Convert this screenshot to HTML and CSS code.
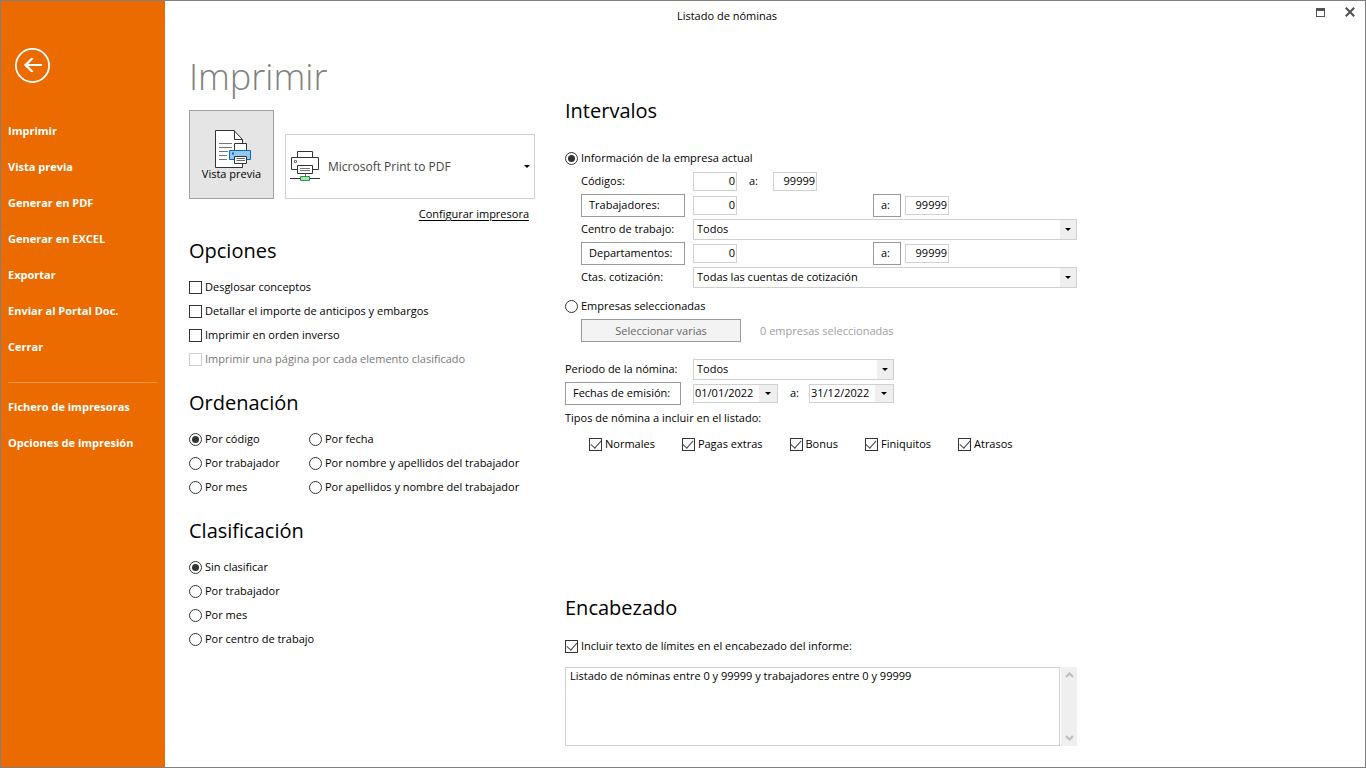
FILE: index.html
```
<!DOCTYPE html>
<html lang="es">
<head>
<meta charset="utf-8">
<meta name="viewport" content="width=device-width, initial-scale=1">
<title>Listado de nóminas</title>
<link rel="stylesheet" href="styles.css">
</head>
<body>
<div class="window">
  <nav class="sidebar" aria-label="Menú">
    <button class="back" type="button" aria-label="Volver">
      <svg width="36" height="36" viewBox="0 0 36 36" fill="none" stroke="#fff"><circle cx="17.500" cy="18.500" r="16.600" stroke-width="1.800"/><path d="M27 18H11" stroke-width="2"/><path d="M18 11.500h-2L9.500 18l6.500 6.500h2L11.800 18z" fill="#fff" stroke-width="1"/></svg>
    </button>
    <ul class="menu">
      <li><a href="#">Imprimir</a></li>
      <li><a href="#">Vista previa</a></li>
      <li><a href="#">Generar en PDF</a></li>
      <li><a href="#">Generar en EXCEL</a></li>
      <li><a href="#">Exportar</a></li>
      <li><a href="#">Enviar al Portal Doc.</a></li>
      <li><a href="#">Cerrar</a></li>
    </ul>
    <ul class="menu menu-extra">
      <li><a href="#">Fichero de impresoras</a></li>
      <li><a href="#">Opciones de impresión</a></li>
    </ul>
  </nav>

  <div class="page">
    <header class="titlebar">
      <span class="title">Listado de nóminas</span>
      <div class="window-buttons">
        <button type="button" aria-label="Maximizar"><svg width="9" height="9" viewBox="0 0 9 9" shape-rendering="crispEdges"><path d="M.5.5h8v8h-8z" fill="none" stroke="#555"/><path d="M0 0h9v3H0z" fill="#555"/></svg></button>
        <button type="button" aria-label="Cerrar ventana"><svg width="10" height="10" viewBox="0 0 10 10"><path d="M.8.8l8.400 8.400M9.200.8L.8 9.200" stroke="#555" stroke-width="2.200"/></svg></button>
      </div>
    </header>

    <main class="content">
      <div class="left">
        <h1>Imprimir</h1>
        <div class="printer-row">
          <button class="preview" type="button">
            <svg width="37" height="38" viewBox="0 0 37 38" fill="none"><path d="M.5.5H19l8.500 9V37.500H.5z" fill="#fff" stroke="#333"/><path d="M19.500.5v9h8" stroke="#333"/><path d="M4 13.500h13M4 17.500h13M4 21.500h9M4 25.500h8M4 29.500h8" stroke="#777"/><path d="M19.500 13.500h12v8h-12z" fill="#fff" stroke="#333"/><path d="M14.500 20.500h21v9h-21z" fill="#92c7f0" stroke="#1267b4"/><path d="M17 22.500h2v2h-2z" fill="#1267b4"/><path d="M19.500 26.500h12v7h-12z" fill="#fff" stroke="#333"/><path d="M21.500 28.500h8.500M21.500 30.500h8.500" stroke="#666"/></svg>
            <span>Vista previa</span>
          </button>
          <div class="combo printer">
            <svg class="printer-icon" width="30" height="31" viewBox="0 0 30 31" fill="none"><path d="M7.500 6.500v-6h15v6" fill="#fff" stroke="#333"/><path d="M7.500 18.500h-6v-12h27v12h-6" fill="#fff" stroke="#333"/><path d="M4.500 9.500h2v2h-2z" stroke="#777"/><path d="M7.500 14.500h15v8h-15z" fill="#fff" stroke="#333"/><path d="M10 17.500h10M10 19.500h10" stroke="#777"/><path d="M15.500 23v2" stroke="#777"/><path d="M0 27.500h30" stroke="#333"/><path d="M10.500 25.500h9v4h-9z" fill="#b5dfb8" stroke="#1a9a48"/></svg>
            <select aria-label="Impresora"><option>Microsoft Print to PDF</option></select>
            <span class="arrow"></span>
          </div>
        </div>
        <div class="config"><a href="#">Configurar impresora</a></div>

        <section class="group">
          <h2>Opciones</h2>
          <label class="choice"><input type="checkbox">Desglosar conceptos</label>
          <label class="choice"><input type="checkbox">Detallar el importe de anticipos y embargos</label>
          <label class="choice"><input type="checkbox">Imprimir en orden inverso</label>
          <label class="choice off"><input type="checkbox" disabled>Imprimir una página por cada elemento clasificado</label>
        </section>

        <section class="group">
          <h2>Ordenación</h2>
          <div class="order">
            <label class="choice"><input type="radio" name="orden" checked>Por código</label>
            <label class="choice"><input type="radio" name="orden">Por fecha</label>
            <label class="choice"><input type="radio" name="orden">Por trabajador</label>
            <label class="choice"><input type="radio" name="orden">Por nombre y apellidos del trabajador</label>
            <label class="choice"><input type="radio" name="orden">Por mes</label>
            <label class="choice"><input type="radio" name="orden">Por apellidos y nombre del trabajador</label>
          </div>
        </section>

        <section class="group">
          <h2>Clasificación</h2>
          <label class="choice"><input type="radio" name="clase" checked>Sin clasificar</label>
          <label class="choice"><input type="radio" name="clase">Por trabajador</label>
          <label class="choice"><input type="radio" name="clase">Por mes</label>
          <label class="choice"><input type="radio" name="clase">Por centro de trabajo</label>
        </section>
      </div>

      <div class="right">
        <section class="ranges">
          <h2>Intervalos</h2>
          <label class="choice"><input type="radio" name="ambito" checked>Información de la empresa actual</label>
          <div class="fields indent">
            <label for="cod1">Códigos:</label>
            <div class="pair"><input class="num" id="cod1" type="text" value="0"><label class="to" for="cod2">a:</label><input class="num" id="cod2" type="text" value="99999"></div>
            <button class="btn" type="button">Trabajadores:</button>
            <div class="pair wide"><input class="num" type="text" value="0" aria-label="Trabajadores desde"><span class="far"><button class="btn" type="button">a:</button><input class="num" type="text" value="99999" aria-label="Trabajadores hasta"></span></div>
            <label for="centro">Centro de trabajo:</label>
            <div class="combo"><select id="centro"><option>Todos</option></select><span class="arrow"></span></div>
            <button class="btn" type="button">Departamentos:</button>
            <div class="pair wide"><input class="num" type="text" value="0" aria-label="Departamentos desde"><span class="far"><button class="btn" type="button">a:</button><input class="num" type="text" value="99999" aria-label="Departamentos hasta"></span></div>
            <label for="ctas">Ctas. cotización:</label>
            <div class="combo"><select id="ctas"><option>Todas las cuentas de cotización</option></select><span class="arrow"></span></div>
          </div>
          <label class="choice companies"><input type="radio" name="ambito">Empresas seleccionadas</label>
          <div class="several indent">
            <button class="btn" type="button" disabled>Seleccionar varias</button>
            <span>0 empresas seleccionadas</span>
          </div>
          <div class="fields period">
            <label for="periodo">Periodo de la nómina:</label>
            <div class="combo short"><select id="periodo"><option>Todos</option></select><span class="arrow"></span></div>
            <button class="btn" type="button">Fechas de emisión:</button>
            <div class="pair">
              <span class="date"><input type="text" value="01/01/2022" aria-label="Fecha desde"><button type="button" aria-label="Abrir calendario desde"><span class="tri"></span></button></span>
              <span class="to">a:</span>
              <span class="date"><input type="text" value="31/12/2022" aria-label="Fecha hasta"><button type="button" aria-label="Abrir calendario hasta"><span class="tri"></span></button></span>
            </div>
          </div>
          <p class="types-title">Tipos de nómina a incluir en el listado:</p>
          <div class="types">
            <label class="choice"><input type="checkbox" checked>Normales</label>
            <label class="choice"><input type="checkbox" checked>Pagas extras</label>
            <label class="choice"><input type="checkbox" checked>Bonus</label>
            <label class="choice"><input type="checkbox" checked>Finiquitos</label>
            <label class="choice"><input type="checkbox" checked>Atrasos</label>
          </div>
        </section>

        <section class="heading-text">
          <h2>Encabezado</h2>
          <label class="choice"><input type="checkbox" checked>Incluir texto de límites en el encabezado del informe:</label>
          <div class="memo">
            <textarea aria-label="Texto del encabezado">Listado de nóminas entre 0 y 99999 y trabajadores entre 0 y 99999</textarea>
            <div class="scroll" aria-hidden="true">
              <svg width="9" height="6" viewBox="0 0 9 6"><path d="M1 5l3.500-3.500L8 5" fill="none" stroke="#bdbdbd" stroke-width="2"/></svg>
              <svg width="9" height="6" viewBox="0 0 9 6"><path d="M1 1l3.500 3.500L8 1" fill="none" stroke="#bdbdbd" stroke-width="2"/></svg>
            </div>
          </div>
        </section>
      </div>
    </main>
  </div>
</div>
</body>
</html>
```
FILE: styles.css
```
* { box-sizing: border-box; }

body {
  margin: 0;
  background: #fff;
  color: #000;
  font: 11px/16px "Open Sans", "Noto Sans", sans-serif;
}

button, input, select, textarea { font: inherit; color: inherit; margin: 0; }
button { cursor: pointer; }
h1, h2, p, ul { margin: 0; padding: 0; }
ul { list-style: none; }

.window {
  display: flex;
  min-height: 100vh;
  border: 1px solid #808080;
}

/* Sidebar */
.sidebar {
  flex: 0 0 164px;
  padding: 46px 8px 0 7px;
  background: #eb6b00;
  color: #fff;
  font-weight: 700;
}
.back {
  display: block;
  margin: 0 0 30px 7px;
  padding: 0;
  border: 0;
  background: none;
}
.back svg { display: block; }
.menu a {
  display: block;
  color: #fff;
  line-height: 36px;
  text-decoration: none;
}
.menu-extra {
  margin-top: 17px;
  padding-top: 6px;
  border-top: 1px solid #f09144;
}

/* Title bar */
.page { flex: 1; min-width: 0; }
.titlebar { display: flex; height: 30px; align-items: center; }
.title { flex: 1; text-align: center; }
.window-buttons {
  display: flex;
  flex: 0 0 76px;
  justify-content: flex-end;
  gap: 20px;
  padding: 0 10px 8px 0;
  align-items: center;
}
.window-buttons button { padding: 0; border: 0; background: none; }
.window-buttons svg { display: block; }

/* Columns */
.content {
  display: grid;
  grid-template-columns: minmax(0, 346fr) minmax(0, 512fr);
  gap: 30px;
  max-width: 936px;
  padding: 0 24px 20px;
}
h1 {
  padding: 22px 0 9px;
  color: #808080;
  font-size: 36px;
  font-weight: 350;
  line-height: 48px;
}
h2 {
  margin-bottom: 4px;
  font-size: 20px;
  font-weight: 400;
  line-height: 40px;
}

.printer-row { display: flex; align-items: flex-end; gap: 11px; }
.preview {
  display: flex;
  flex: 0 0 85px;
  flex-direction: column;
  align-items: center;
  justify-content: center;
  height: 89px;
  padding: 3px 0 0;
  border: 1px solid #a0a0a0;
  background: #e5e5e5;
}
.preview svg { margin: 0 0 -2px 4px; }
.config { padding: 7px 6px 9px 0; text-align: right; }
.config a { color: #000; text-underline-offset: 2px; }

.group + .group { margin-top: 12px; }
.order { display: grid; grid-template-columns: 120px 1fr; }

/* Check boxes and radio buttons */
.choice {
  display: flex;
  align-items: center;
  gap: 3px;
  height: 24px;
  white-space: nowrap;
}
.choice input {
  display: grid;
  flex: none;
  place-content: center;
  width: 13px;
  height: 13px;
  border: 1px solid #333;
  background: #fff;
  appearance: none;
}
.choice input[type="radio"] { border-radius: 50%; }
.choice input[type="radio"]:checked::before {
  content: "";
  width: 7px;
  height: 7px;
  border-radius: 50%;
  background: #333;
}
.choice input[type="checkbox"]:checked::before {
  content: "";
  width: 9px;
  height: 5px;
  margin-bottom: 3px;
  border: solid #444;
  border-width: 0 0 1px 1px;
  transform: rotate(-48deg);
}
.choice.off { color: #777; }
.choice.off input { border-color: #ccc; }

/* Drop-downs */
.combo {
  position: relative;
  display: flex;
  align-items: center;
  height: 21px;
  border: 1px solid #d0d0d0;
}
.combo select {
  flex: 1;
  min-width: 0;
  height: 100%;
  padding: 0 18px 0 3px;
  border: 0;
  background: none;
  appearance: none;
}
.arrow {
  position: absolute;
  top: 0;
  right: 0;
  bottom: 0;
  display: grid;
  place-content: center;
  width: 16px;
  background: #efefef;
  pointer-events: none;
}
.arrow::before, .tri::before {
  content: "";
  display: block;
  border: 3px solid transparent;
  border-top-color: #000;
  border-bottom: 0;
}
.short { width: 201px; }
.printer { flex: 1; height: 65px; padding-left: 4px; }
.printer-icon { flex: none; }
.printer select { padding-left: 8px; color: #444; font-size: 12px; }
.printer .arrow { width: 14px; background: none; }

/* Intervals */
.right { padding-top: 60px; }
.ranges h2 { margin-bottom: 15px; }
.indent { padding-left: 16px; }
.fields {
  display: grid;
  grid-template-columns: 104px 1fr;
  grid-auto-rows: 24px;
  column-gap: 8px;
  align-items: center;
}
.ranges .choice + .fields { margin-top: -1px; }
.btn {
  height: 23px;
  padding: 0 7px;
  border: 1px solid #999;
  background: #fff;
  text-align: left;
  white-space: nowrap;
}
.pair { display: flex; align-items: center; }
.to { width: 36px; padding-left: 12px; }
.num {
  width: 44px;
  height: 19px;
  padding: 0 1px 2px;
  border: 1px solid #d0d0d0;
  text-align: right;
}
.wide { justify-content: space-between; padding-right: 128px; }
.far { display: flex; align-items: center; gap: 4px; }
.far .btn { width: 28px; }

.companies { margin-top: 5px; }
.several {
  display: flex;
  align-items: center;
  gap: 19px;
  margin-top: 1px;
  color: #a0a0a0;
}
.several .btn {
  flex: 0 0 160px;
  background: #f3f3f3;
  color: #666;
  text-align: center;
}
.period { grid-template-columns: 116px 1fr; column-gap: 12px; margin-top: 15px; }
.period label { white-space: nowrap; }
.period .to { width: 31px; }
.date {
  display: flex;
  width: 85px;
  height: 19px;
  border: 1px solid #d0d0d0;
}
.date input { flex: 1; min-width: 0; padding: 0 1px 1px; border: 0; }
.date button {
  display: grid;
  flex: 0 0 18px;
  place-content: center;
  padding: 0;
  border: 0;
  background: #efefef;
}
.types-title { padding-top: 5px; }
.types { display: flex; gap: 27px; margin-top: 6px; padding-left: 24px; }

/* Report heading */
.heading-text { margin-top: 132px; }
.heading-text h2 { margin-bottom: 6px; }
.memo { display: flex; gap: 1px; margin-top: 9px; }
.memo textarea {
  flex: 1;
  height: 79px;
  padding: 0 4px;
  border: 1px solid #d0d0d0;
  resize: none;
}
.scroll {
  display: flex;
  flex: 0 0 16px;
  flex-direction: column;
  align-items: center;
  justify-content: space-between;
  padding: 5px 0;
  background: #efefef;
}
```
